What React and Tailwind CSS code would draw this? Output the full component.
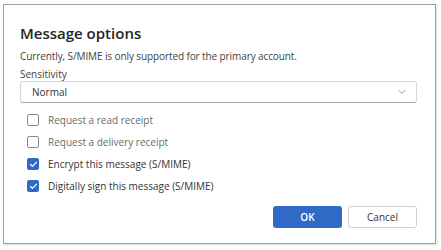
import { ChevronDown, Check } from "lucide-react";

const options = [
  { label: "Request a read receipt", checked: false },
  { label: "Request a delivery receipt", checked: false },
  { label: "Encrypt this message (S/MIME)", checked: true },
  { label: "Digitally sign this message (S/MIME)", checked: true },
];

const CheckRow = ({ label, checked }) => (
  <label className="flex items-center gap-[9px] h-[22px]">
    {checked ? (
      <span className="w-[12px] h-[12px] rounded-[2px] bg-[#2f6bc6] flex items-center justify-center">
        <Check className="w-[9px] h-[9px] text-white" strokeWidth={3} />
      </span>
    ) : (
      <span className="w-[12px] h-[12px] rounded-[2px] border border-[#8a8a8a] bg-white" />
    )}
    <span className={checked ? "text-[#333]" : "text-[#6b6b6b]"}>{label}</span>
  </label>
);

export default function App() {
  return (
    <div
      className="w-[441px] h-[250px] bg-white pt-[4px] pl-[3px]"
      style={{ fontFamily: '"Open Sans", "Noto Sans", sans-serif' }}
    >
      <div className="w-[433px] h-[240px] border border-[#a0a0a0] shadow-[1px_1px_2px_rgba(0,0,0,0.15)] bg-white px-[16px] flex flex-col">
        <h1 className="mt-[18px] text-[15px] leading-[20px] font-semibold text-[#242424]">Message options</h1>
        <p className="mt-[6px] text-[10px] leading-[14px] text-[#424242] tracking-[-0.1px]">
          Currently, S/MIME is only supported for the primary account.
        </p>
        <div className="mt-[4px] text-[10px] leading-[14px] text-[#424242]">Sensitivity</div>
        <div className="h-[22px] w-[397px] rounded-[3px] border border-[#d6d6d6] border-b-[#a8a8a8] flex items-center justify-between pl-[11px] pr-[8px] text-[10px] text-[#333]">
          <span>Normal</span>
          <ChevronDown className="w-[12px] h-[12px] text-[#777]" strokeWidth={1.5} />
        </div>
        <div className="mt-[6px] pl-[7px] flex flex-col text-[10px]">
          {options.map((o) => (
            <CheckRow key={o.label} {...o} />
          ))}
        </div>
        <div className="mt-[9px] flex justify-end gap-[6px] w-[397px]">
          <button className="w-[69px] h-[22px] rounded-[3px] bg-[#2f6bc6] text-white text-[10px] font-semibold">
            OK
          </button>
          <button className="w-[69px] h-[22px] rounded-[3px] border border-[#d1d1d1] bg-white text-[#333] text-[10px]">
            Cancel
          </button>
        </div>
      </div>
    </div>
  );
}
